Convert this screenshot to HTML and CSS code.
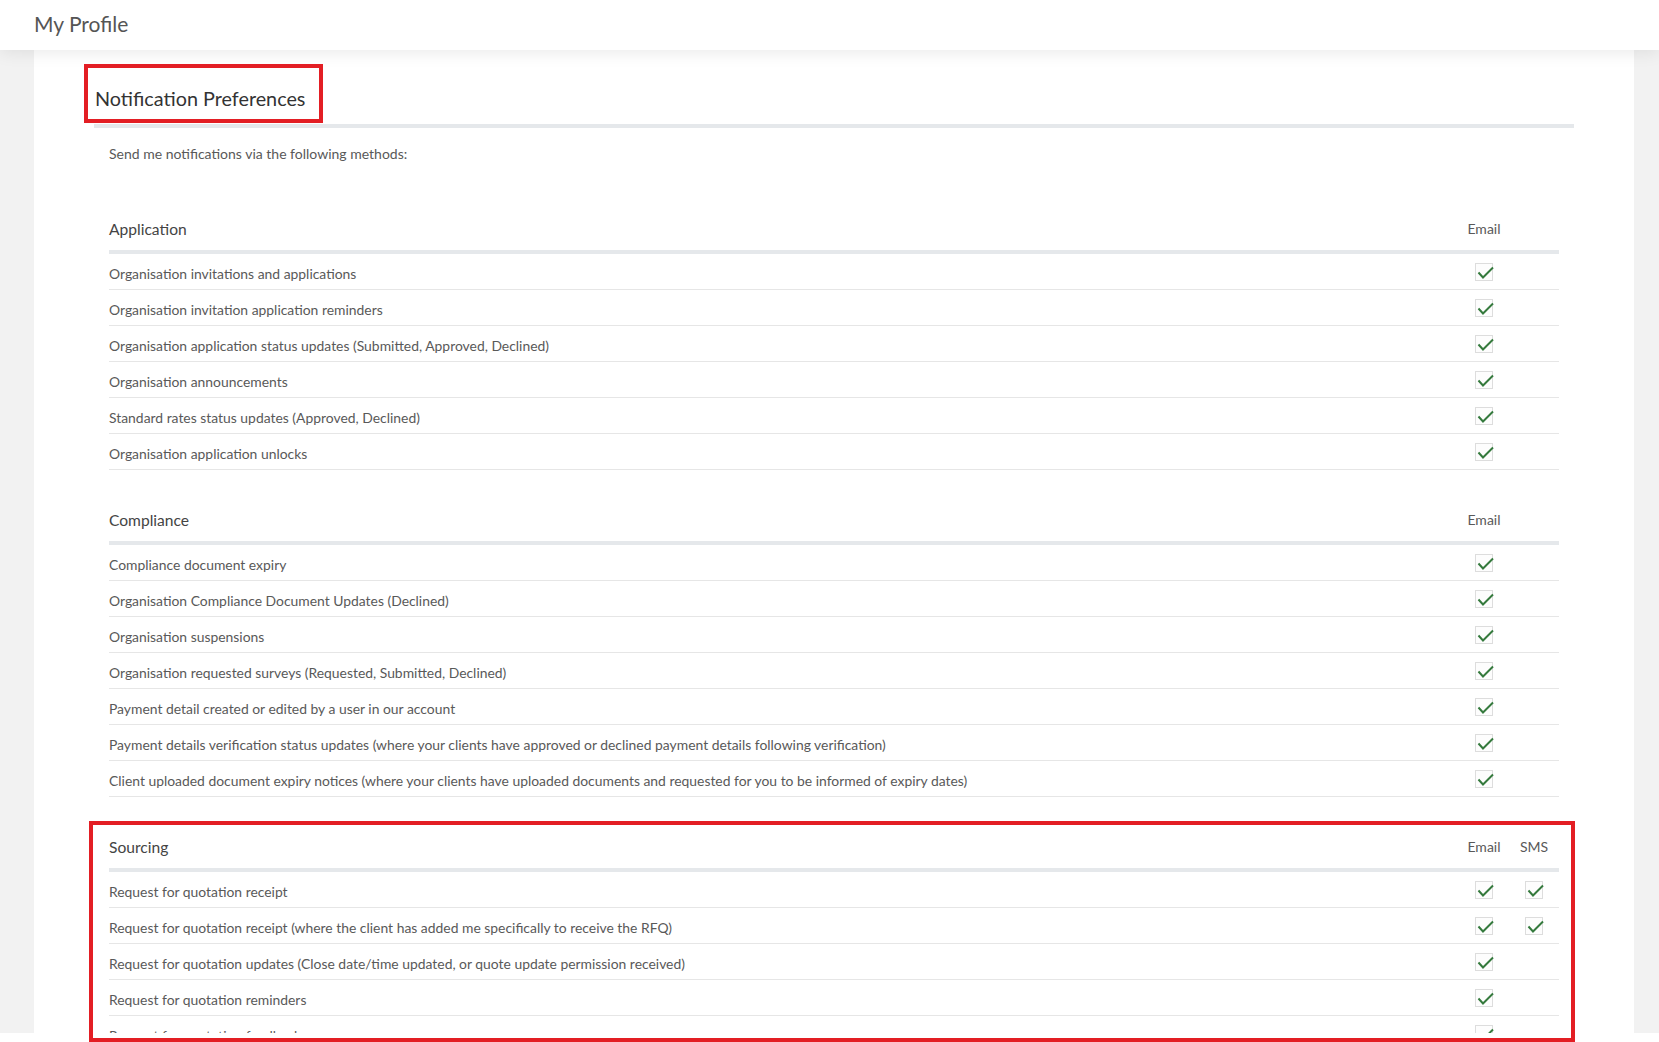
FILE: index.html
```html
<!DOCTYPE html>
<html lang="en">
<head>
  <meta charset="UTF-8" />
  <meta name="viewport" content="width=device-width, initial-scale=1.0"/>
  <title>My Profile</title>
  <link rel="stylesheet" href="styles.css">
</head>
<body>

<header class="topbar">
  <h1>My Profile</h1>
</header>

<main class="page">
  <div class="card">
    <h2 class="card-title">Notification Preferences</h2>
    <p class="intro">Send me notifications via the following methods:</p>

    <!-- Application -->
    <div class="section">
      <div class="row head">
        <span class="name">Application</span>
        <span class="col">Email</span>
        <span class="col"></span>
      </div>
      <div class="row">
        <span class="name">Organisation invitations and applications</span>
        <span class="col"><span class="check"><svg viewBox="0 0 18 18"><path d="M2.5 9.5 L7 14.5 L17 4.5"/></svg></span></span>
        <span class="col"></span>
      </div>
      <div class="row">
        <span class="name">Organisation invitation application reminders</span>
        <span class="col"><span class="check"><svg viewBox="0 0 18 18"><path d="M2.5 9.5 L7 14.5 L17 4.5"/></svg></span></span>
        <span class="col"></span>
      </div>
      <div class="row">
        <span class="name">Organisation application status updates (Submitted, Approved, Declined)</span>
        <span class="col"><span class="check"><svg viewBox="0 0 18 18"><path d="M2.5 9.5 L7 14.5 L17 4.5"/></svg></span></span>
        <span class="col"></span>
      </div>
      <div class="row">
        <span class="name">Organisation announcements</span>
        <span class="col"><span class="check"><svg viewBox="0 0 18 18"><path d="M2.5 9.5 L7 14.5 L17 4.5"/></svg></span></span>
        <span class="col"></span>
      </div>
      <div class="row">
        <span class="name">Standard rates status updates (Approved, Declined)</span>
        <span class="col"><span class="check"><svg viewBox="0 0 18 18"><path d="M2.5 9.5 L7 14.5 L17 4.5"/></svg></span></span>
        <span class="col"></span>
      </div>
      <div class="row">
        <span class="name">Organisation application unlocks</span>
        <span class="col"><span class="check"><svg viewBox="0 0 18 18"><path d="M2.5 9.5 L7 14.5 L17 4.5"/></svg></span></span>
        <span class="col"></span>
      </div>
    </div>

    <!-- Compliance -->
    <div class="section">
      <div class="row head">
        <span class="name">Compliance</span>
        <span class="col">Email</span>
        <span class="col"></span>
      </div>
      <div class="row">
        <span class="name">Compliance document expiry</span>
        <span class="col"><span class="check"><svg viewBox="0 0 18 18"><path d="M2.5 9.5 L7 14.5 L17 4.5"/></svg></span></span>
        <span class="col"></span>
      </div>
      <div class="row">
        <span class="name">Organisation Compliance Document Updates (Declined)</span>
        <span class="col"><span class="check"><svg viewBox="0 0 18 18"><path d="M2.5 9.5 L7 14.5 L17 4.5"/></svg></span></span>
        <span class="col"></span>
      </div>
      <div class="row">
        <span class="name">Organisation suspensions</span>
        <span class="col"><span class="check"><svg viewBox="0 0 18 18"><path d="M2.5 9.5 L7 14.5 L17 4.5"/></svg></span></span>
        <span class="col"></span>
      </div>
      <div class="row">
        <span class="name">Organisation requested surveys (Requested, Submitted, Declined)</span>
        <span class="col"><span class="check"><svg viewBox="0 0 18 18"><path d="M2.5 9.5 L7 14.5 L17 4.5"/></svg></span></span>
        <span class="col"></span>
      </div>
      <div class="row">
        <span class="name">Payment detail created or edited by a user in our account</span>
        <span class="col"><span class="check"><svg viewBox="0 0 18 18"><path d="M2.5 9.5 L7 14.5 L17 4.5"/></svg></span></span>
        <span class="col"></span>
      </div>
      <div class="row">
        <span class="name">Payment details verification status updates (where your clients have approved or declined payment details following verification)</span>
        <span class="col"><span class="check"><svg viewBox="0 0 18 18"><path d="M2.5 9.5 L7 14.5 L17 4.5"/></svg></span></span>
        <span class="col"></span>
      </div>
      <div class="row">
        <span class="name">Client uploaded document expiry notices (where your clients have uploaded documents and requested for you to be informed of expiry dates)</span>
        <span class="col"><span class="check"><svg viewBox="0 0 18 18"><path d="M2.5 9.5 L7 14.5 L17 4.5"/></svg></span></span>
        <span class="col"></span>
      </div>
    </div>

    <!-- Sourcing -->
    <div class="section">
      <div class="row head">
        <span class="name">Sourcing</span>
        <span class="col">Email</span>
        <span class="col">SMS</span>
      </div>
      <div class="row">
        <span class="name">Request for quotation receipt</span>
        <span class="col"><span class="check"><svg viewBox="0 0 18 18"><path d="M2.5 9.5 L7 14.5 L17 4.5"/></svg></span></span>
        <span class="col"><span class="check"><svg viewBox="0 0 18 18"><path d="M2.5 9.5 L7 14.5 L17 4.5"/></svg></span></span>
      </div>
      <div class="row">
        <span class="name">Request for quotation receipt (where the client has added me specifically to receive the RFQ)</span>
        <span class="col"><span class="check"><svg viewBox="0 0 18 18"><path d="M2.5 9.5 L7 14.5 L17 4.5"/></svg></span></span>
        <span class="col"><span class="check"><svg viewBox="0 0 18 18"><path d="M2.5 9.5 L7 14.5 L17 4.5"/></svg></span></span>
      </div>
      <div class="row">
        <span class="name">Request for quotation updates (Close date/time updated, or quote update permission received)</span>
        <span class="col"><span class="check"><svg viewBox="0 0 18 18"><path d="M2.5 9.5 L7 14.5 L17 4.5"/></svg></span></span>
        <span class="col"></span>
      </div>
      <div class="row">
        <span class="name">Request for quotation reminders</span>
        <span class="col"><span class="check"><svg viewBox="0 0 18 18"><path d="M2.5 9.5 L7 14.5 L17 4.5"/></svg></span></span>
        <span class="col"></span>
      </div>
      <div class="row">
        <span class="name">Request for quotation feedback</span>
        <span class="col"><span class="check"><svg viewBox="0 0 18 18"><path d="M2.5 9.5 L7 14.5 L17 4.5"/></svg></span></span>
        <span class="col"></span>
      </div>
    </div>
  </div>
</main>

<!-- annotation boxes -->
<div class="mark mark-title"></div>
<div class="mark mark-sourcing"></div>

</body>
</html>
```

FILE: styles.css
```css
:root {
  --text-color: #595959;
  --head-color: #444444;
  --line-color: #e6e6e6;
  --rule-color: #e5e8eb;
  --check-color: #357a3d;
  --mark-color: #e31e24;
}

* {
  box-sizing: border-box;
  font-family: 'Lato', 'Open Sans', sans-serif;
}

body {
  margin: 0;
  background: #ffffff;
  position: relative;
  height: 1042px;
  overflow: hidden;
}

.topbar {
  position: relative;
  z-index: 2;
  height: 50px;
  background: #ffffff;
  padding: 0 34px 4px;
  display: flex;
  align-items: center;
  box-shadow: 0 2px 18px rgba(0, 0, 0, 0.09);
}

.topbar h1 {
  margin: 0;
  font-size: 21px;
  font-weight: 400;
  color: #555555;
}

.page {
  height: 983px;
  overflow: hidden;
  background: #f2f2f2;
  padding: 0 25px 0 34px;
}

.card {
  background: #ffffff;
  height: 100%;
  padding: 0 60px;
}

.card-title {
  margin: 0;
  padding: 34px 0 12px 1px;
  font-size: 19.8px;
  line-height: 28px;
  font-weight: 400;
  color: #333333;
  border-bottom: 4px solid var(--rule-color);
}

.intro {
  margin: 16px 15px 45px;
  font-size: 14px;
  line-height: 20px;
  color: var(--text-color);
}

.section {
  margin: 30px 15px 0;
}

.row {
  display: grid;
  grid-template-columns: 1fr 50px 50px;
  align-items: center;
  height: 36px;
  border-bottom: 1px solid var(--line-color);
  font-size: 13.9px;
  color: var(--text-color);
}

.row .name {
  padding-top: 3px;
}

.row.head {
  height: 45px;
  padding-bottom: 2px;
  border-bottom: 4px solid var(--rule-color);
  font-size: 14px;
}

.row.head .name {
  padding-top: 0;
  font-size: 15.6px;
  color: var(--head-color);
}

.col {
  text-align: center;
  display: flex;
  justify-content: center;
}

.check {
  display: block;
  width: 18px;
  height: 18px;
  border: 1px solid #dddddd;
  background: #fdfdfd;
}

.check svg {
  display: block;
  width: 18px;
  height: 18px;
  margin: -1px 0 0 0;
  overflow: visible;
}

.check path {
  fill: none;
  stroke: var(--check-color);
  stroke-width: 2;
}

.mark {
  position: absolute;
  border: 4px solid var(--mark-color);
  z-index: 3;
}

.mark-title {
  left: 84px;
  top: 64px;
  width: 239px;
  height: 59px;
}

.mark-sourcing {
  left: 89px;
  top: 821px;
  width: 1486px;
  height: 221px;
}
```
